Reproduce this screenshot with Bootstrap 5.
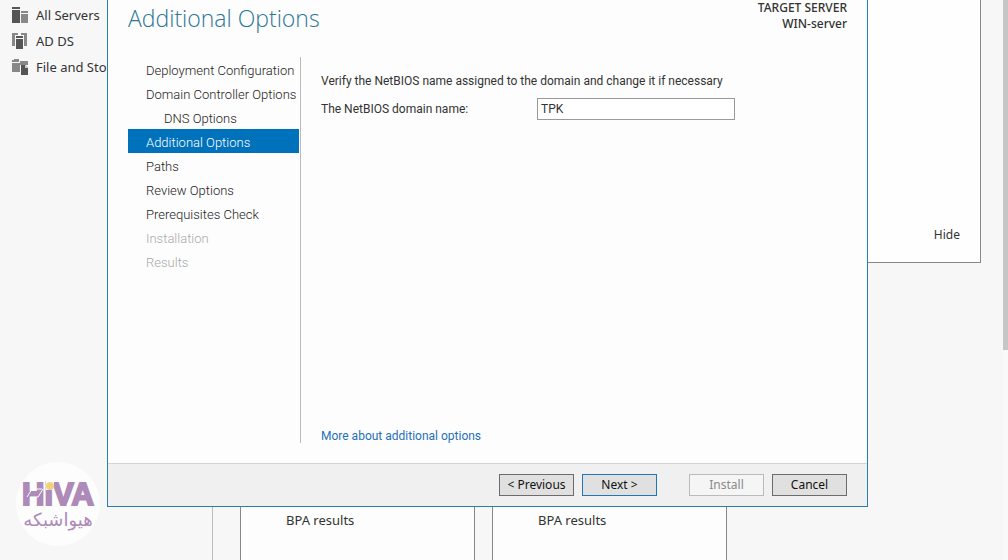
<!DOCTYPE html>
<html lang="en">
<head>
<meta charset="utf-8">
<meta name="viewport" content="width=device-width, initial-scale=1">
<title>Active Directory Domain Services Configuration Wizard</title>
<link href="https://cdn.jsdelivr.net/npm/bootstrap@5.3.0/dist/css/bootstrap.min.css" rel="stylesheet">
<style>
  body { font-family: "Noto Sans", "Open Sans", sans-serif; font-size: 12px; line-height: 16px; color: #333; background: #f7f7f7; }
  .app { min-height: 100vh; }
  .side-panel { width: 213px; padding-top: 2px; border-right: 1px solid #bdbdbd; }
  .side-link { height: 26px; gap: 7px; padding-left: 12px; font-size: 13px; color: #333; }
  .side-link svg { width: 17px; height: 16px; }
  .workspace { padding: 0 22px 0 27px; min-width: 0; }
  .welcome { height: 263px; background: #fefefe; border: 1px solid #888; border-top: 0; padding: 0 20px 19px; }
  .hide-link { color: #333; }
  .tiles { gap: 17px; margin-top: 120px; }
  .tile { width: 235px; background: #fdfdfd; border: 1px solid #888; border-bottom: 0; padding: 128px 45px 0; font-size: 13px; }
  .scroll-track { width: 5px; background: #f9f9f9; }
  .scroll-thumb { height: 350px; background: #c6c6c6; }
  .wizard { left: 107px; right: 140px; top: 0; background: #fdfdfd; border: 1px solid #2a7fa8; border-top: 0; }
  .wizard-head { height: 57px; padding: 0 20px; }
  .wizard-title { font-family: "Open Sans", sans-serif; font-size: 23px; font-weight: 300; line-height: 36px; color: #2c7795; }
  .target { font-weight: 500; line-height: 16px; color: #333; }
  .wizard-body { padding: 0 20px 20px; }
  .steps { width: 173px; height: 386px; padding-right: 1px; border-right: 1px solid #bbb; }
  .step { height: 24px; line-height: 27px; padding-left: 18px; font-family: Roboto, sans-serif; font-size: 13px; font-weight: 300; color: #222; white-space: nowrap; }
  .step.sub { padding-left: 36px; }
  .step.current { background: #0072bc; color: #fff; }
  .step.off { color: #aaa; }
  .page-pane { padding: 16px 0 0 20px; font-family: Roboto, sans-serif; }
  .intro { margin-bottom: 9px; }
  .field-label { width: 216px; }
  .field-box { width: 198px; height: 22px; border: 1px solid #999; background: #fff; padding: 0 3px; color: #333; }
  .more-link { line-height: 14px; color: #1f70b5; }
  .wizard-foot { height: 43px; padding: 0 20px; background: #f0f0f0; border-top: 1px solid #d4d4d4; }
  .wbtn { width: 75px; height: 22px; padding: 0; font-size: 12px; line-height: 20px; color: #111; background: #e0e0e0; border: 1px solid #6c6c6c; border-radius: 0; }
  .wbtn.primary { border-color: #2376b4; }
  .wbtn:disabled { color: #8a8a8a; background: #f5f5f5; border-color: #bbb; opacity: 1; }
  .watermark { left: 10px; bottom: 10px; width: 95px; height: 95px; }
</style>
</head>
<body>
<div class="app d-flex position-relative overflow-hidden">
  <nav class="side-panel flex-shrink-0" aria-label="Server groups">
    <a class="side-link d-flex align-items-center text-decoration-none text-nowrap" href="#">
      <svg viewBox="0 0 17 16"><path fill="#555" d="M0 0h8v2H0zM0 3h8v13H0z"/><path fill="#888" d="M9 4h7v2H9zM9 7h7v9H9z"/></svg>All Servers</a>
    <a class="side-link d-flex align-items-center text-decoration-none text-nowrap" href="#">
      <svg viewBox="0 0 17 16"><path fill="#888" d="M0 0h6v2H3v11H0zM9 0h6v13h-3V2H9z"/><path fill="#555" d="M4 3h7v2H4zM4 6h7v10H4z"/></svg>AD DS</a>
    <a class="side-link d-flex align-items-center text-decoration-none text-nowrap" href="#">
      <svg viewBox="0 0 17 16"><path fill="#888" d="M0 1h2V0h5v3H0zM0 4h8v9H0zM8 2h8v4H8z"/><path fill="#555" d="M9 6h4l3 3v7H9z"/><path fill="#ccc" d="M13 6v3h3z"/></svg>File and Sto</a>
  </nav>

  <main class="workspace d-flex flex-column flex-grow-1">
    <section class="welcome d-flex align-items-end justify-content-end">
      <a class="hide-link text-decoration-none" href="#">Hide</a>
    </section>
    <section class="tiles d-flex flex-grow-1">
      <div class="tile">BPA results</div>
      <div class="tile">BPA results</div>
    </section>
  </main>
  <div class="scroll-track flex-shrink-0"><div class="scroll-thumb"></div></div>

  <section class="wizard position-absolute" role="dialog" aria-labelledby="wizard-title">
    <header class="wizard-head d-flex justify-content-between">
      <h1 class="wizard-title m-0" id="wizard-title">Additional Options</h1>
      <div class="target text-end">TARGET SERVER<br>WIN-server</div>
    </header>
    <div class="wizard-body d-flex">
      <div class="steps flex-shrink-0">
        <div class="step">Deployment Configuration</div>
        <div class="step">Domain Controller Options</div>
        <div class="step sub">DNS Options</div>
        <div class="step current">Additional Options</div>
        <div class="step">Paths</div>
        <div class="step">Review Options</div>
        <div class="step">Prerequisites Check</div>
        <div class="step off">Installation</div>
        <div class="step off">Results</div>
      </div>
      <div class="page-pane d-flex flex-column flex-grow-1">
        <p class="intro">Verify the NetBIOS name assigned to the domain and change it if necessary</p>
        <div class="d-flex align-items-center">
          <label class="field-label" for="netbios">The NetBIOS domain name:</label>
          <input class="field-box" id="netbios" type="text" value="TPK">
        </div>
        <a class="more-link mt-auto text-decoration-none" href="#">More about additional options</a>
      </div>
    </div>
    <footer class="wizard-foot d-flex align-items-center justify-content-end gap-2">
      <button class="btn wbtn" type="button">&lt; Previous</button>
      <button class="btn wbtn primary me-4" type="button">Next &gt;</button>
      <button class="btn wbtn" type="button" disabled>Install</button>
      <button class="btn wbtn" type="button">Cancel</button>
    </footer>
  </section>

  <svg class="watermark position-absolute" viewBox="0 0 95 95" role="img" aria-label="Hiva Shabake">
    <circle cx="48" cy="49" r="42" fill="#fdfdfd"/>
    <text x="12" y="50" font-family="Liberation Sans, sans-serif" font-weight="700" font-size="31" fill="#ad8ab8" stroke="#ad8ab8" stroke-width="2">HiVA</text>
    <path d="M36 24h8v11h-8z" fill="#fdfdfd"/>
    <circle cx="40" cy="31" r="4" fill="#efd27d"/>
    <path d="M17 42l5-8h10M20 42h8l5-8M57 50l9-18" fill="none" stroke="#fdfdfd"/>
    <text x="48" y="71" text-anchor="middle" direction="rtl" font-family="DejaVu Sans, sans-serif" font-size="18" fill="#ad8ab8">هیواشبکه</text>
  </svg>
</div>
<script src="https://cdn.jsdelivr.net/npm/bootstrap@5.3.0/dist/js/bootstrap.bundle.min.js"></script>
</body>
</html>
